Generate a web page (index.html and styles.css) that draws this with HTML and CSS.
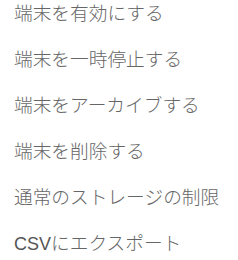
FILE: index.html
```html
<!DOCTYPE html>
<html lang="ja">
<head>
    <meta charset="UTF-8">
    <meta name="viewport" content="width=device-width, initial-scale=1.0">
    <title>端末メニュー</title>
    <link rel="stylesheet" href="styles.css">
</head>
<body>
    <ul class="menu">
        <li class="menu-item">端末を有効にする</li>
        <li class="menu-item">端末を一時停止する</li>
        <li class="menu-item">端末をアーカイブする</li>
        <li class="menu-item">端末を削除する</li>
        <li class="menu-item">通常のストレージの制限</li>
        <li class="menu-item"><span class="latin">CSV</span>にエクスポート</li>
    </ul>
</body>
</html>
```

FILE: styles.css
```css
body {
    margin: 0;
    background-color: #fff;
    font-family: "Liberation Sans", "Noto Sans CJK JP", sans-serif;
}
.menu {
    list-style: none;
    margin: -9px 0 0 0;
    padding: 0;
}
.menu-item {
    padding: 10px 14px;
    font-size: 18.7px;
    font-weight: 300;
    line-height: 26px;
    color: #666;
    white-space: nowrap;
    cursor: pointer;
}
.latin {
    font-size: 18px;
    font-weight: 400;
    color: #555;
}
```
